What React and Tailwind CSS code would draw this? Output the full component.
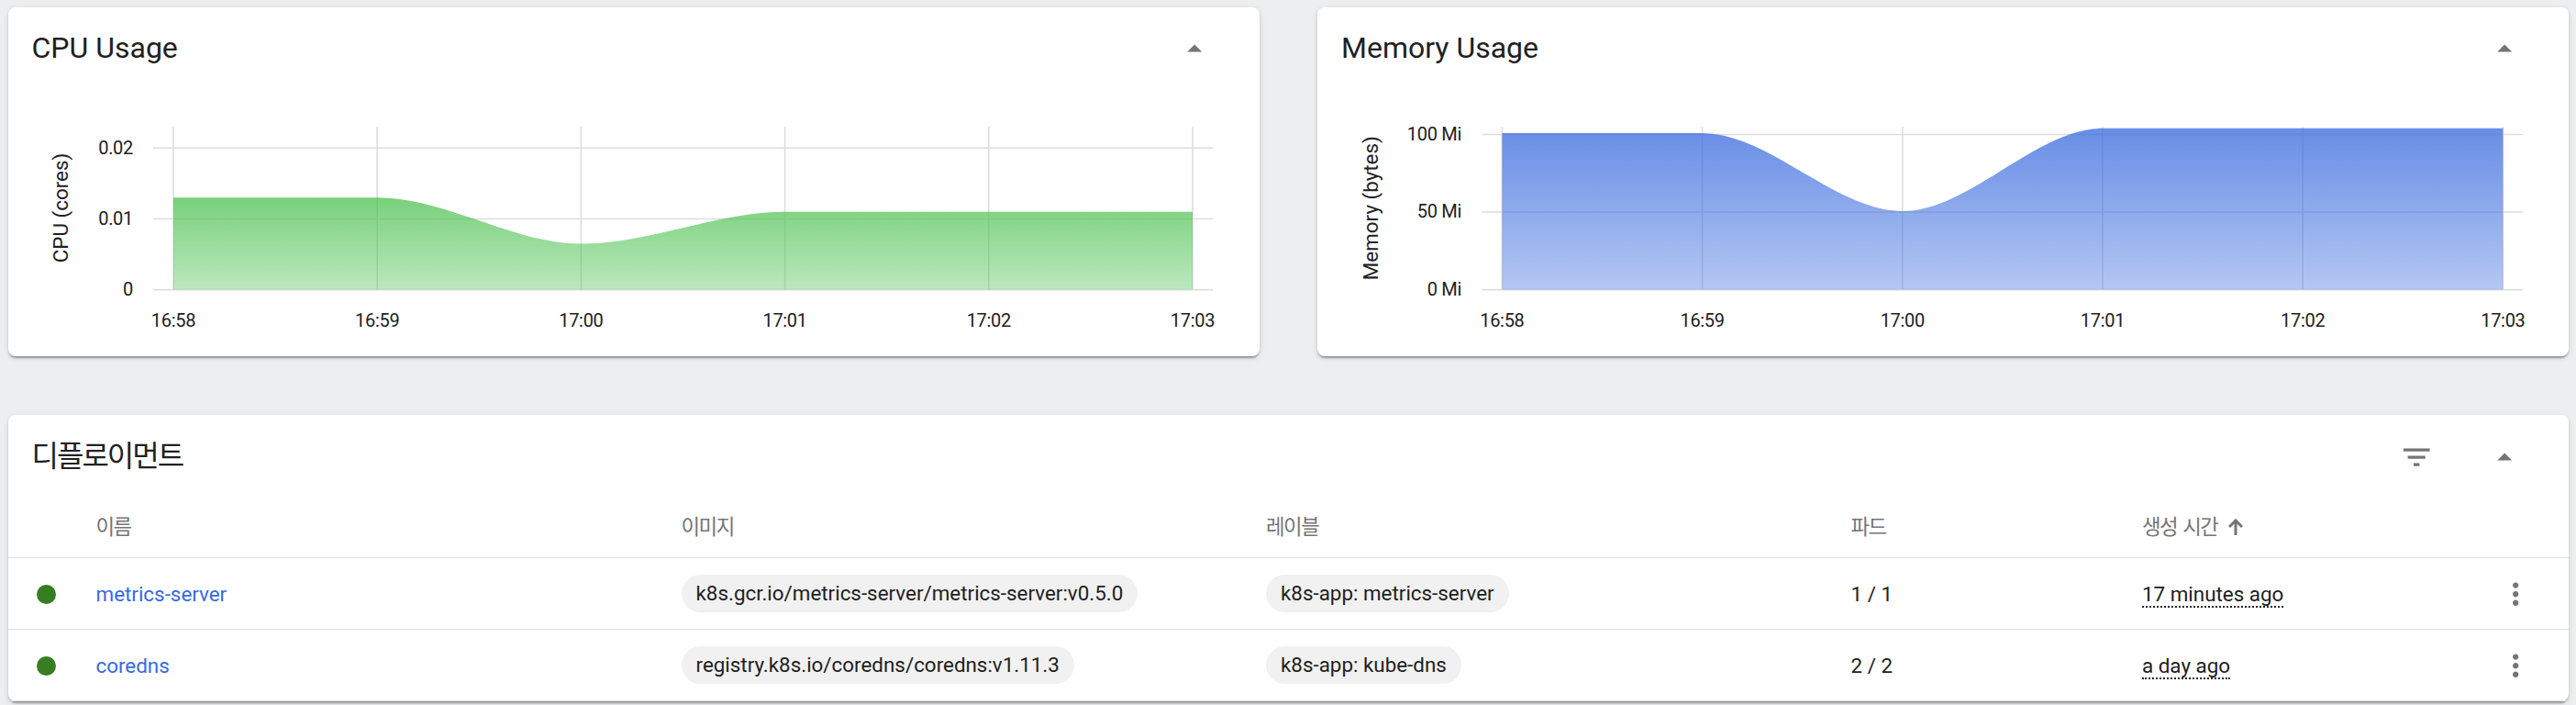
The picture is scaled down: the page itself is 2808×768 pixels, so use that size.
import React from "react";

const FONT = "Roboto, 'Noto Sans CJK KR', sans-serif";

const cpu = {
  id: "cpu",
  title: "CPU Usage",
  label: "CPU (cores)",
  labelX: 65,
  color: "#54c458",
  labelY: 122.5,
  x0: 180,
  step: 222.2,
  lineX: [158, 1313],
  tickX: 136,
  yTicks: [["0.02", 57.2], ["0.01", 134.5], ["0", 211.6]],
  ys: [111.2, 111.2, 161.6, 126.8, 126.8, 126.8],
};

const memory = {
  id: "memory",
  title: "Memory Usage",
  label: "Memory (bytes)",
  labelX: 65.5,
  color: "#3f6fdf",
  labelY: 122.7,
  x0: 201.4,
  step: 218.2,
  lineX: [179.5, 1314],
  tickX: 157,
  yTicks: [["100 Mi", 42.5], ["50 Mi", 127], ["0 Mi", 211.6]],
  ys: [41, 41, 126, 35.8, 35.8, 35.8],
};

const times = ["16:58", "16:59", "17:00", "17:01", "17:02", "17:03"];

function areaPath({ x0, step, ys }) {
  const base = 211.6;
  let d = `M${x0} ${base}V${ys[0]}`;
  for (let i = 1; i < ys.length; i++) {
    const a = x0 + step * (i - 1);
    d += `C${a + step / 3} ${ys[i - 1]} ${a + (2 * step) / 3} ${ys[i]} ${a + step} ${ys[i]}`;
  }
  return `${d}V${base}Z`;
}

function Chart({ data }) {
  return (
    <svg width="1364" height="276" viewBox="0 0 1364 276" className="block" fill="#212121">
      <defs>
        <linearGradient id={data.id} x1="0" y1="0" x2="0" y2="1">
          <stop offset="0" stopColor={data.color} stopOpacity="0.79" />
          <stop offset="1" stopColor={data.color} stopOpacity="0.39" />
        </linearGradient>
      </defs>
      <g stroke="#dddddd" strokeWidth="1.6">
        {data.yTicks.map(([t, y]) => (
          <line key={t} x1={data.lineX[0]} x2={data.lineX[1]} y1={y} y2={y} />
        ))}
        {times.map((t, i) => (
          <line key={t} x1={data.x0 + data.step * i} x2={data.x0 + data.step * i} y1="34" y2="211" />
        ))}
      </g>
      <path d={areaPath(data)} fill={`url(#${data.id})`} />
      <g fontSize="20" letterSpacing="-0.3">
        {data.yTicks.map(([t, y]) => (
          <text key={t} x={data.tickX} y={y + 6.3} textAnchor="end">{t}</text>
        ))}
        {times.map((t, i) => (
          <text key={t} x={data.x0 + data.step * i} y="252" textAnchor="middle">{t}</text>
        ))}
      </g>
      <text fontSize="22.4" textAnchor="middle" transform={`translate(${data.labelX} ${data.labelY}) rotate(-90)`}>
        {data.label}
      </text>
    </svg>
  );
}

function Icon({ d }) {
  return (
    <svg viewBox="0 0 24 24" className="size-[38.4px] shrink-0" fill="#757575">
      <path d={d} />
    </svg>
  );
}

const UP = "M7 14l5-5 5 5z";
const FILTER = "M10 18h4v-2h-4v2zM3 6v2h18V6H3zm3 7h12v-2H6v2z";
const MORE =
  "M12 8c1.1 0 2-.9 2-2s-.9-2-2-2-2 .9-2 2 .9 2 2 2zm0 2c-1.1 0-2 .9-2 2s.9 2 2 2 2-.9 2-2-.9-2-2-2zm0 6c-1.1 0-2 .9-2 2s.9 2 2 2 2-.9 2-2-.9-2-2-2z";

const CARD =
  "bg-white rounded-[8px] shadow-[0_4px_2px_-2px_rgba(0,0,0,0.2),0_2px_2px_0_rgba(0,0,0,0.14),0_2px_6px_0_rgba(0,0,0,0.12)]";

function ChartCard({ data }) {
  return (
    <section className={`${CARD} w-[1364px] h-[380px]`}>
      <header className="flex h-[96px] items-start justify-between pl-[26px] pr-[51px]">
        <h2 className="pt-[25px] text-[32px] leading-[38px]">{data.title}</h2>
        <div className="pt-[26px]"><Icon d={UP} /></div>
      </header>
      <Chart data={data} />
    </section>
  );
}

function Chip({ children }) {
  return (
    <span className="flex h-[41px] w-fit items-center rounded-full bg-[#f1f1f1] px-4">{children}</span>
  );
}

const COLS = "grid grid-cols-[96px_638px_637.5px_637.5px_317.5px_1fr_96px] items-center";

const rows = [
  ["metrics-server", "k8s.gcr.io/metrics-server/metrics-server:v0.5.0", "k8s-app: metrics-server", "1 / 1", "17 minutes ago"],
  ["coredns", "registry.k8s.io/coredns/coredns:v1.11.3", "k8s-app: kube-dns", "2 / 2", "a day ago"],
];

export default function App() {
  return (
    <main
      className="flex h-[768px] w-[2808px] flex-col gap-16 overflow-hidden bg-[#eceef0] pt-2 pl-[8.5px] pr-2 text-[#212121]"
      style={{ fontFamily: FONT }}
    >
      <div className="flex shrink-0 justify-between">
        <ChartCard data={cpu} />
        <ChartCard data={memory} />
      </div>
      <section className={`${CARD} h-[312px] shrink-0 text-[22.4px]`}>
        <header className="flex h-[88px] items-start pl-[26px] pr-[51px]">
          <h2 className="grow pt-[26px] text-[32px] leading-[38px] tracking-[-2px]">디플로이먼트</h2>
          <div className="flex gap-[57.6px] pt-[27px]">
            <Icon d={FILTER} />
            <Icon d={UP} />
          </div>
        </header>
        <div className={`${COLS} h-[68px] border-b border-[#dedede] pt-[2px] text-[#757575] tracking-[-1.5px]`}>
          <span />
          <span>이름</span>
          <span>이미지</span>
          <span>레이블</span>
          <span>파드</span>
          <span className="flex items-center gap-3 [word-spacing:2px]">
            생성 시간
            <svg viewBox="0 0 16 18" className="h-[18px] w-4" fill="none" stroke="#757575" strokeWidth="3">
              <path d="M8 18V2M1 9l7-7 7 7" />
            </svg>
          </span>
          <span />
        </div>
        {rows.map(([name, image, label, pods, age]) => (
          <div key={name} className={`${COLS} h-[78px] border-b border-[#dedede]`}>
            <span className="mt-[2px] ml-[31px] size-[21px] rounded-full bg-[#377e22]" />
            <span className="pt-[2px] text-[#376adf]">{name}</span>
            <Chip>{image}</Chip>
            <Chip>{label}</Chip>
            <span className="pt-[2px]">{pods}</span>
            <span className="pt-[2px]">
              <span className="border-b-2 border-dotted border-[#212121] leading-none">{age}</span>
            </span>
            <span className="justify-self-end pt-[2px] pr-[38.5px]"><Icon d={MORE} /></span>
          </div>
        ))}
      </section>
    </main>
  );
}
